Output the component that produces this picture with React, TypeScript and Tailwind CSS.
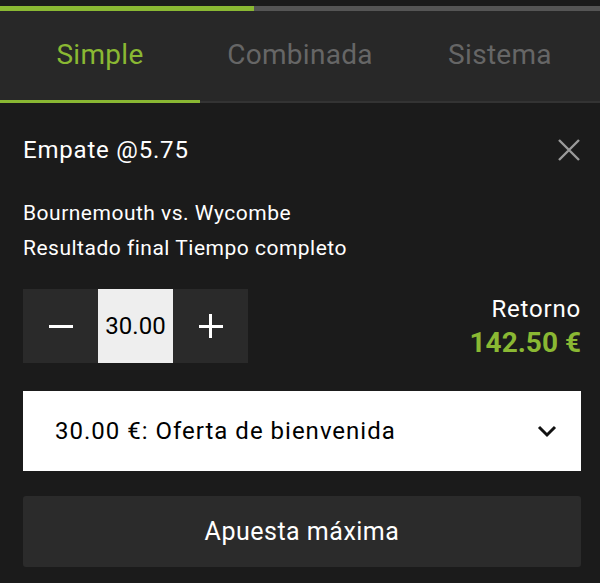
import React, { useState } from "react";

const tabs = ["Simple", "Combinada", "Sistema"];

export default function App() {
    const [active, setActive] = useState(0);
    const [stake, setStake] = useState("30.00");

    return (
        <div className="w-[600px] h-[583px] bg-[#1b1b1b] text-white overflow-hidden" style={{ fontFamily: "Roboto, 'Liberation Sans', sans-serif" }}>
            {/* progress */}
            <div className="pt-[6px]">
                <div className="flex h-[5px] bg-[#555]">
                    <div className="w-[254px] bg-[#8ab833]" />
                </div>
            </div>

            {/* tabs */}
            <div className="flex bg-[#282828] h-[92px] border-b-[2px] border-[#333]">
                {tabs.map((t, i) => (
                    <button
                        key={t}
                        onClick={() => setActive(i)}
                        className={`flex-1 flex items-center justify-center text-[28px] tracking-[0.3px] pb-[6px] border-b-[3px] -mb-[2px] pt-[5px] ${i === active ? "text-[#8ab833] border-[#8ab833]" : "text-[#666] border-transparent"}`}
                    >
                        {t}
                    </button>
                ))}
            </div>

            <div className="pl-[23px] pr-[19px]">
                {/* header */}
                <div className="flex items-center justify-between pt-[32px]">
                    <span className="text-[24px] leading-[30px] tracking-[0.8px]">Empate @5.75</span>
                    <svg width="24" height="24" viewBox="0 0 24 24">
                        <path d="M2 2 L22 22 M22 2 L2 22" stroke="#9a9a9a" strokeWidth="2.4" />
                    </svg>
                </div>

                <div className="mt-[31px] text-[21px] leading-[35px] tracking-[0.5px]">
                    <div>Bournemouth vs. Wycombe</div>
                    <div>Resultado final Tiempo completo</div>
                </div>

                {/* stake + return */}
                <div className="flex items-center justify-between mt-[23px]">
                    <div className="flex h-[74px] bg-[#2a2a2a]">
                        <button onClick={() => setStake((Math.max(0, parseFloat(stake) - 1)).toFixed(2))} className="w-[75px] flex items-center justify-center">
                            <span className="block w-[24px] h-[3px] bg-white" />
                        </button>
                        <input
                            value={stake}
                            onChange={(e) => setStake(e.target.value)}
                            className="w-[75px] bg-[#eeeeee] text-black text-center text-[24px] outline-none"
                        />
                        <button onClick={() => setStake((parseFloat(stake) + 1).toFixed(2))} className="w-[75px] flex items-center justify-center relative">
                            <span className="block w-[24px] h-[3px] bg-white" />
                            <span className="absolute block w-[3px] h-[24px] bg-white" />
                        </button>
                    </div>
                    <div className="text-right">
                        <div className="text-[24px] leading-[34px] tracking-[0.8px]">Retorno</div>
                        <div className="text-[28px] leading-[34px] font-bold text-[#8ab833]">142.50 €</div>
                    </div>
                </div>

                {/* offer select */}
                <div className="mt-[28px] h-[80px] bg-white text-black flex items-center justify-between pl-[32px] pr-[24px]">
                    <span className="text-[24px] tracking-[1px]">30.00 €: Oferta de bienvenida</span>
                    <svg width="20" height="14" viewBox="0 0 20 14">
                        <path d="M2 3 L10 11 L18 3" fill="none" stroke="#111" strokeWidth="3" />
                    </svg>
                </div>

                {/* max stake */}
                <button className="mt-[25px] w-full h-[71px] rounded-[3px] bg-[#2b2b2b] text-[25px] tracking-[0.5px] flex items-center justify-center">
                    Apuesta máxima
                </button>
            </div>
        </div>
    );
}
